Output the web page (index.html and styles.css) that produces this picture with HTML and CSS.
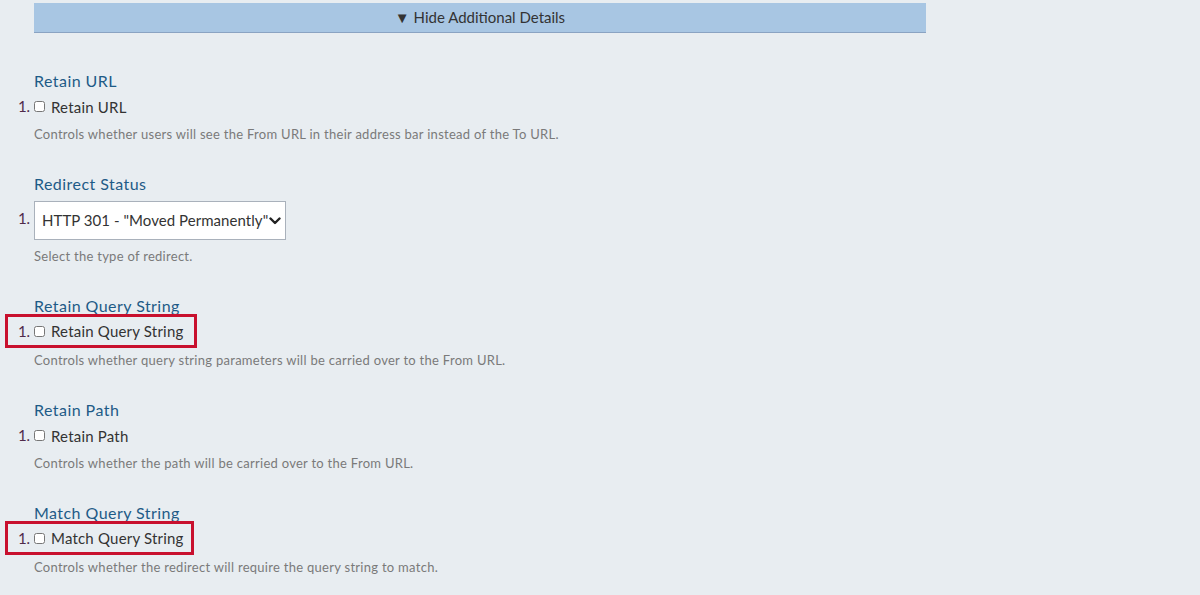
FILE: index.html
```html
<!DOCTYPE html>
<html>
<head>
<meta charset="utf-8">
<link rel="stylesheet" href="styles.css">
</head>
<body>
<div class="page">
  <div class="toggle-bar">&#9660; Hide Additional Details</div>

  <div class="field">
    <div class="field-label">Retain URL</div>
    <ol class="opts">
      <li><label class="opt"><input type="checkbox"> Retain URL</label></li>
    </ol>
    <p class="desc">Controls whether users will see the From URL in their address bar instead of the To URL.</p>
  </div>

  <div class="field">
    <div class="field-label">Redirect Status</div>
    <ol class="opts opts-select">
      <li>
        <span class="select-wrap">
          <select class="select"><option>HTTP 301 - "Moved Permanently"</option></select>
          <svg class="chev" width="12" height="8" viewBox="0 0 12 8"><path d="M1.5 1.5 L6 6 L10.5 1.5" fill="none" stroke="#222" stroke-width="2.4" stroke-linecap="round" stroke-linejoin="round"/></svg>
        </span>
      </li>
    </ol>
    <p class="desc desc-select">Select the type of redirect.</p>
  </div>

  <div class="field">
    <div class="field-label">Retain Query String</div>
    <ol class="opts opts-hl">
      <li><label class="opt hl"><input type="checkbox"> Retain Query String</label></li>
    </ol>
    <p class="desc">Controls whether query string parameters will be carried over to the From URL.</p>
  </div>

  <div class="field">
    <div class="field-label">Retain Path</div>
    <ol class="opts">
      <li><label class="opt"><input type="checkbox"> Retain Path</label></li>
    </ol>
    <p class="desc">Controls whether the path will be carried over to the From URL.</p>
  </div>

  <div class="field">
    <div class="field-label">Match Query String</div>
    <ol class="opts opts-hl">
      <li><label class="opt hl hl-short"><input type="checkbox"> Match Query String</label></li>
    </ol>
    <p class="desc">Controls whether the redirect will require the query string to match.</p>
  </div>
</div>
</body>
</html>
```

FILE: styles.css
```css
html, body {
  margin: 0;
  padding: 0;
  background: #e8edf1;
}
body {
  font-family: Lato, "Liberation Sans", sans-serif;
  color: #333;
}
.page {
  padding: 3px 0 0 34px;
  width: 892px;
}
.toggle-bar {
  background: #a8c6e3;
  border-bottom: 1px solid #8aa3c2;
  height: 29px;
  line-height: 29px;
  text-align: center;
  font-size: 15px;
  color: #333;
}
.field {
  margin-top: 38px;
}
.field + .field {
  margin-top: 31px;
}
.field-label {
  font-size: 16px;
  line-height: 20px;
  letter-spacing: 0.45px;
  color: #1e5b87;
}
.opts {
  margin: 5px 0 0 0;
  padding: 0;
  list-style: decimal outside;
}
.opts-select {
  margin-top: 7px;
}
.opts-hl {
  padding-bottom: 2px;
}
.opts li {
  font-size: 15px;
  line-height: 20px;
  color: #4f2a4a;
}
.opt {
  position: relative;
  display: inline-flex;
  align-items: center;
  gap: 6px;
  color: #333;
  letter-spacing: 0.2px;
}
.opt input {
  margin: 0;
  width: 11px;
  height: 11px;
}
.opt.hl::after {
  content: "";
  position: absolute;
  left: -29px;
  right: -14px;
  top: -7px;
  bottom: -7px;
  border: 3px solid #c8102e;
}
.opt.hl-short::after {
  right: -10px;
}
.select-wrap {
  position: relative;
  display: inline-block;
  vertical-align: middle;
}
.select {
  appearance: none;
  -webkit-appearance: none;
  width: 252px;
  height: 39px;
  border: 1px solid #a9b1bb;
  border-radius: 0;
  background: #fff;
  padding: 0 0 0 7px;
  font-family: Lato, "Liberation Sans", sans-serif;
  font-size: 15px;
  letter-spacing: 0.05px;
  color: #333;
}
.chev {
  position: absolute;
  right: 5px;
  top: 16px;
  pointer-events: none;
}
.desc {
  margin: 8px 0 0 0;
  font-size: 13px;
  line-height: 18px;
  letter-spacing: 0.28px;
  color: #7a7a7a;
}
.desc-select {
  margin-top: 7px;
}
```
